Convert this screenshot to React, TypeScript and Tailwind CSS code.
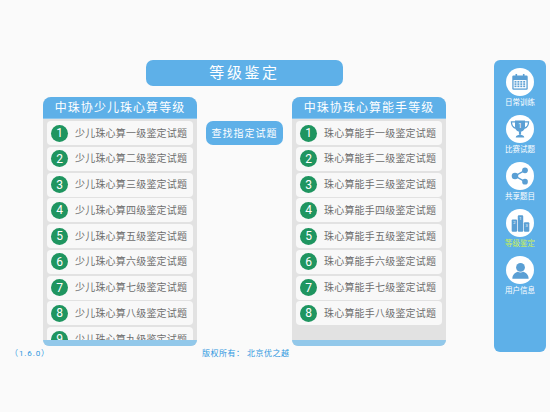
import React from 'react';

const cjk = { fontFamily: '"Roboto", "Noto Sans CJK SC", sans-serif' };

const juniorRows = ['一', '二', '三', '四', '五', '六', '七', '八', '九'].map((n) => `少儿珠心算${n}级鉴定试题`);
const adultRows = ['一', '二', '三', '四', '五', '六', '七', '八'].map((n) => `珠心算能手${n}级鉴定试题`);

function LevelPanel({ title, rows }: { title: string; rows: string[] }) {
  return (
    <div className="w-[154px] h-[249px] flex flex-col rounded-t-[8px] rounded-b-[6px] overflow-hidden bg-[#e2e2e2]">
      <div className="h-[22px] shrink-0 flex items-center justify-center bg-[#5eb0e8] text-white text-[12px] tracking-[1.05px] border-b border-[#8cc6ee]">
        {title}
      </div>
      <div className="flex-1 min-h-0 overflow-hidden px-[4px] pt-[2px] flex flex-col gap-[1.75px]">
        {rows.map((text, i) => (
          <div key={text} className="h-[24px] shrink-0 flex items-center bg-[#f8f8f8] rounded-[4px] pl-[4px]">
            <span className="w-[17px] h-[17px] rounded-full bg-[#1f9560] text-white text-[12px] flex items-center justify-center">
              {i + 1}
            </span>
            <span className="ml-[7px] text-[10px] tracking-[0.2px] text-[#6e6e6e] whitespace-nowrap">{text}</span>
          </div>
        ))}
      </div>
      <div className="h-[6px] shrink-0 bg-[#92c8ea]" />
    </div>
  );
}

function CalendarIcon() {
  return (
    <svg viewBox="0 0 28 28" className="w-[18px] h-[18px]">
      <rect x="2" y="4" width="24" height="22" rx="2" fill="#5a9fd4" />
      <rect x="4" y="11" width="20" height="13" fill="#fff" />
      <rect x="7" y="1.5" width="2.5" height="5" fill="#5a9fd4" />
      <rect x="18.5" y="1.5" width="2.5" height="5" fill="#5a9fd4" />
      {[5.5, 10, 14.5, 19].map((x) =>
        [12.5, 16, 19.5].map((y) => <rect key={`${x}-${y}`} x={x} y={y} width="3" height="2.5" fill="#5a9fd4" />),
      )}
    </svg>
  );
}

function TrophyIcon() {
  return (
    <svg viewBox="0 0 28 28" className="w-[20px] h-[20px]">
      <path d="M7 2h14v9c0 4-3 7-7 7s-7-3-7-7z" fill="#5a9fd4" />
      <path d="M7 4H2c0 5 2 8 6 9M21 4h5c0 5-2 8-6 9" fill="none" stroke="#5a9fd4" strokeWidth="1.8" />
      <rect x="12.5" y="17" width="3" height="5" fill="#5a9fd4" />
      <path d="M8 26c0-3 3-4 6-4s6 1 6 4z" fill="#5a9fd4" />
      <text x="14" y="12.5" textAnchor="middle" fontSize="10" fill="#fff" fontFamily="Roboto, sans-serif">1</text>
    </svg>
  );
}

function ShareIcon() {
  return (
    <svg viewBox="0 0 28 28" className="w-[20px] h-[20px]">
      <path d="M21 6 7 14l14 8" fill="none" stroke="#5a9fd4" strokeWidth="2" />
      <circle cx="21" cy="6" r="4" fill="#5a9fd4" />
      <circle cx="7" cy="14" r="4.6" fill="#5a9fd4" />
      <circle cx="21" cy="22" r="4" fill="#5a9fd4" />
    </svg>
  );
}

function BarsIcon() {
  return (
    <svg viewBox="0 0 28 28" className="w-[19px] h-[19px]" fontFamily="Roboto, sans-serif" fontSize="6" textAnchor="middle" fill="#fff">
      <rect x="1" y="8" width="8" height="18" rx="1.5" fill="#5a9fd4" />
      <rect x="10" y="2" width="8" height="24" rx="1.5" fill="#5a9fd4" />
      <rect x="19" y="12" width="8" height="14" rx="1.5" fill="#5a9fd4" />
      <text x="5" y="15">2</text>
      <text x="14" y="9">1</text>
      <text x="23" y="19">3</text>
    </svg>
  );
}

function UserIcon() {
  return (
    <svg viewBox="0 0 28 28" className="w-[19px] h-[19px]">
      <circle cx="14" cy="9.5" r="6.5" fill="#5a9fd4" />
      <path d="M2 26c0-6 5-9 8-10 2 1.5 6 1.5 8 0 3 1 8 4 8 10z" fill="#5a9fd4" />
    </svg>
  );
}

const navItems = [
  { label: '日常训练', icon: <CalendarIcon /> },
  { label: '比赛试题', icon: <TrophyIcon /> },
  { label: '共享题目', icon: <ShareIcon /> },
  { label: '等级鉴定', icon: <BarsIcon />, active: true },
  { label: '用户信息', icon: <UserIcon /> },
];

export default function App() {
  return (
    <div className="w-[550px] h-[412px] overflow-hidden bg-[#fafafa] flex pt-[60px]" style={cjk}>
      <div className="w-[494px] shrink-0 pl-[43px]">
        <div className="ml-[103px] w-[197px] h-[26px] rounded-[7px] bg-[#5eb0e8] text-white text-[15px] tracking-[2.6px] flex items-center justify-center">
          等级鉴定
        </div>
        <div className="mt-[11px] flex items-start">
          <LevelPanel title="中珠协少儿珠心算等级" rows={juniorRows} />
          <button className="mt-[24px] ml-[9px] w-[77px] h-[24px] rounded-[7px] bg-[#5eb0e8] text-white text-[10px] tracking-[1px] flex items-center justify-center">
            查找指定试题
          </button>
          <div className="ml-[9px]">
            <LevelPanel title="中珠协珠心算能手等级" rows={adultRows} />
          </div>
        </div>
        <div className="mt-[2px] flex text-[8px] text-[#2f98e0] whitespace-nowrap -ml-[43px]">
          <span className="w-[202px] pl-[10px] tracking-[0.9px]">（1.6.0）</span>
          <span className="tracking-[0.5px]">版权所有： 北京优之越</span>
        </div>
      </div>
      <div className="w-[52px] h-[292px] rounded-[6px] bg-[#5eb0e8] flex flex-col items-center pt-[8px]">
        {navItems.map((item) => (
          <div key={item.label} className="h-[47px] flex flex-col items-center">
            <div className="w-[28px] h-[28px] rounded-full bg-white flex items-center justify-center">{item.icon}</div>
            <div className={`mt-[1px] text-[7.5px] leading-[11px] whitespace-nowrap ${item.active ? 'text-[#c8ee5a]' : 'text-white'}`}>
              {item.label}
            </div>
          </div>
        ))}
      </div>
    </div>
  );
}
